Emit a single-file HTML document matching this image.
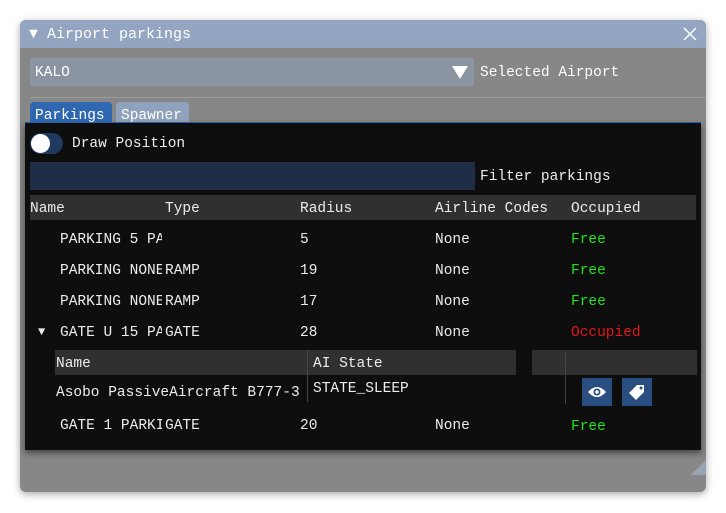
<!DOCTYPE html>
<html><head><style>
body{margin:0;width:726px;height:513px;background:#fff;position:relative;overflow:hidden;font-family:"Liberation Mono",monospace;font-size:14.5px;color:#ececec}
.a{position:absolute;white-space:nowrap}
.n{width:102px;overflow:hidden}
.win{left:20px;top:20px;width:686px;height:472px;background:#878787;border-radius:6px;box-shadow:0 2px 8px rgba(0,0,0,.35);overflow:hidden}
.title{left:0;top:0;width:686px;height:28px;background:#93a5c1;color:#fff}
.panel{left:25px;top:123px;width:676px;height:327px;background:#0e0e0e;box-shadow:0 3px 6px rgba(0,0,0,.5)}
.g{color:#21e021}.r{color:#e01818}
</style></head><body>
<div class="a win">
 <div class="a title"><span class="a" style="left:9px;top:6px;font-size:15px">▼ Airport parkings</span>
 <svg class="a" style="left:663px;top:7px" width="14" height="14"><path d="M1 1L13 13M13 1L1 13" stroke="#fff" stroke-width="1.5"/></svg></div>
 <div class="a" style="left:10px;top:38px;width:416px;height:28px;background:#8a95a1"></div>
 <span class="a" style="left:15px;top:45px;color:#fff">KALO</span>
 <div class="a" style="left:426px;top:38px;width:28px;height:28px;background:#8a95a1"></div>
 <svg class="a" style="left:432px;top:46px" width="16" height="13"><path d="M0 0H16L8 13Z" fill="#fff"/></svg>
 <span class="a" style="left:460px;top:45px;color:#fff">Selected Airport</span>
 <div class="a" style="left:10px;top:77px;width:676px;height:1px;background:#9a9a9a"></div>
 <div class="a" style="left:10px;top:82px;width:82px;height:26px;background:#2f67b0;border-radius:4px 4px 0 0"></div>
 <span class="a" style="left:15px;top:83px;color:#fff;line-height:26px">Parkings</span>
 <div class="a" style="left:96px;top:82px;width:73px;height:26px;background:#8fa3be;border-radius:4px 4px 0 0"></div>
 <span class="a" style="left:101px;top:83px;color:#fff;line-height:26px">Spawner</span>
 <div class="a" style="left:5px;top:102px;width:676px;height:2px;background:#2f67b0"></div>
 <div class="a" style="left:671px;top:440px;width:15px;height:15px;background:linear-gradient(135deg,transparent 50%,#9aa3b2 50%)"></div>
</div>
<div class="a panel"></div>
<div class="a" style="left:30px;top:133px;width:33px;height:21px;background:#1f3a5e;border-radius:11px"></div>
<div class="a" style="left:31px;top:134px;width:19px;height:19px;background:#fff;border-radius:50%"></div>
<span class="a" style="left:72px;top:136px">Draw Position</span>
<div class="a" style="left:30px;top:162px;width:445px;height:28px;background:#1e2d48"></div>
<span class="a" style="left:480px;top:169px">Filter parkings</span>
<div class="a" style="left:30px;top:195px;width:666px;height:25px;background:#303030"></div>
<span class="a" style="left:30px;top:201px">Name</span>
<span class="a" style="left:165px;top:201px">Type</span>
<span class="a" style="left:300px;top:201px">Radius</span>
<span class="a" style="left:435px;top:201px">Airline Codes</span>
<span class="a" style="left:571px;top:201px">Occupied</span>

<span class="a n" style="left:60px;top:232px">PARKING 5 PA</span>
<span class="a" style="left:300px;top:232px">5</span><span class="a" style="left:435px;top:232px">None</span><span class="a g" style="left:571px;top:232px">Free</span>
<span class="a n" style="left:60px;top:263px">PARKING NONE</span><span class="a" style="left:165px;top:263px">RAMP</span>
<span class="a" style="left:300px;top:263px">19</span><span class="a" style="left:435px;top:263px">None</span><span class="a g" style="left:571px;top:263px">Free</span>
<span class="a n" style="left:60px;top:294px">PARKING NONE</span><span class="a" style="left:165px;top:294px">RAMP</span>
<span class="a" style="left:300px;top:294px">17</span><span class="a" style="left:435px;top:294px">None</span><span class="a g" style="left:571px;top:294px">Free</span>
<span class="a" style="left:38px;top:325px;font-size:12px">▼</span>
<span class="a n" style="left:60px;top:325px">GATE U 15 PA</span><span class="a" style="left:165px;top:325px">GATE</span>
<span class="a" style="left:300px;top:325px">28</span><span class="a" style="left:435px;top:325px">None</span><span class="a r" style="left:571px;top:325px">Occupied</span>

<div class="a" style="left:55px;top:350px;width:461px;height:25px;background:#303030"></div>
<div class="a" style="left:532px;top:350px;width:165px;height:25px;background:#303030"></div>
<div class="a" style="left:307px;top:350px;width:1px;height:52px;background:#444"></div>
<div class="a" style="left:565px;top:352px;width:1px;height:52px;background:#444"></div>
<span class="a" style="left:56px;top:356px">Name</span>
<span class="a" style="left:313px;top:356px">AI State</span>
<span class="a" style="left:56px;top:385px;width:243px;overflow:hidden">Asobo PassiveAircraft B777-3</span>
<span class="a" style="left:313px;top:381px">STATE_SLEEP</span>
<div class="a" style="left:582px;top:378px;width:30px;height:28px;background:#2a4e80"></div>
<svg class="a" style="left:587px;top:384px" width="20" height="16"><path d="M1 8Q10 -2 19 8Q10 18 1 8Z" fill="#fff"/><circle cx="10" cy="8" r="3.5" fill="#2a4e80"/><circle cx="10" cy="8" r="1.8" fill="#fff"/></svg>
<div class="a" style="left:622px;top:378px;width:30px;height:28px;background:#2a4e80"></div>
<svg class="a" style="left:627px;top:383px" width="20" height="18"><path d="M2 10L10 2H17V9L9 17Z" fill="#fff"/><circle cx="14" cy="5" r="1.5" fill="#2a4e80"/></svg>
<span class="a n" style="left:60px;top:418px">GATE 1 PARKI</span><span class="a" style="left:165px;top:418px">GATE</span>
<span class="a" style="left:300px;top:418px">20</span><span class="a" style="left:435px;top:418px">None</span><span class="a g" style="left:571px;top:419px">Free</span>
</body></html>
